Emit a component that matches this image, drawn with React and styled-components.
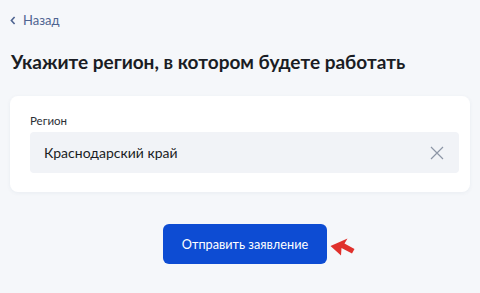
import React from "react";
import styled, { createGlobalStyle } from "styled-components";

const Global = createGlobalStyle`
  html, body { margin: 0; padding: 0; background: #f5f7fa; }
  body { font-family: Lato, "Noto Sans", sans-serif; color: #0b1f33; }
`;

const Page = styled.div`
  width: 480px;
  height: 293px;
  box-sizing: border-box;
  padding: 11px 10px 0 10px;
  display: flex;
  flex-direction: column;
  overflow: hidden;
`;

const Back = styled.a`
  display: flex;
  align-items: center;
  gap: 7px;
  font-size: 13px;
  line-height: 18px;
  color: #4e6491;
  text-decoration: none;
`;

const Title = styled.h1`
  margin: 20px 0 0 1px;
  font-size: 19px;
  line-height: 26px;
  font-weight: 700;
  color: #1a1d24;
  letter-spacing: 0;
`;

const Card = styled.div`
  margin-top: 21px;
  background: #fff;
  border-radius: 8px;
  box-shadow: 0 1px 4px rgba(40, 60, 100, 0.06);
  padding: 18px 11px 19px 20px;
  display: flex;
  flex-direction: column;
`;

const Label = styled.div`
  font-size: 11.5px;
  line-height: 14px;
  color: #2b2f36;
  margin-bottom: 4px;
`;

const Input = styled.div`
  height: 41px;
  background: #f1f3f7;
  border-radius: 4px;
  display: flex;
  align-items: center;
  justify-content: space-between;
  padding: 0 15px 0 14px;
  font-size: 14px;
  color: #1a1d24;
`;

const Actions = styled.div`
  margin-top: 32px;
  display: flex;
  justify-content: center;
  align-items: center;
  position: relative;
`;

const Button = styled.button`
  width: 164px;
  height: 40px;
  border: none;
  border-radius: 6px;
  background: #0d4cd3;
  color: #fff;
  font-family: Lato, "Noto Sans", sans-serif;
  font-size: 12.7px;
  cursor: pointer;
  margin-left: 10px;
`;

const Arrow = styled.svg`
  position: absolute;
  left: 316px;
  top: 11px;
`;

export default function App() {
  return (
    <>
      <Global />
      <Page>
        <Back href="#">
          <svg width="6" height="9" viewBox="0 0 6 9">
            <path d="M4.6 1 L1.4 4.5 L4.6 8" fill="none" stroke="#4e6491" strokeWidth="1.6" />
          </svg>
          Назад
        </Back>
        <Title>Укажите регион, в котором будете работать</Title>
        <Card>
          <Label>Регион</Label>
          <Input>
            <span>Краснодарский край</span>
            <svg width="14" height="14" viewBox="0 0 14 14">
              <path d="M1 1 L13 13 M13 1 L1 13" stroke="#8d96a6" strokeWidth="1.2" fill="none" />
            </svg>
          </Input>
        </Card>
        <Actions>
          <Button>Отправить заявление</Button>
          <Arrow width="32" height="24" viewBox="0 0 32 24">
            <path d="M4.5 11 L21.5 3.5 L18.5 8.5 L28.5 14 L26 18.5 L15.5 13 L15 20.5 Z" fill="#e0312c" />
          </Arrow>
        </Actions>
      </Page>
    </>
  );
}
